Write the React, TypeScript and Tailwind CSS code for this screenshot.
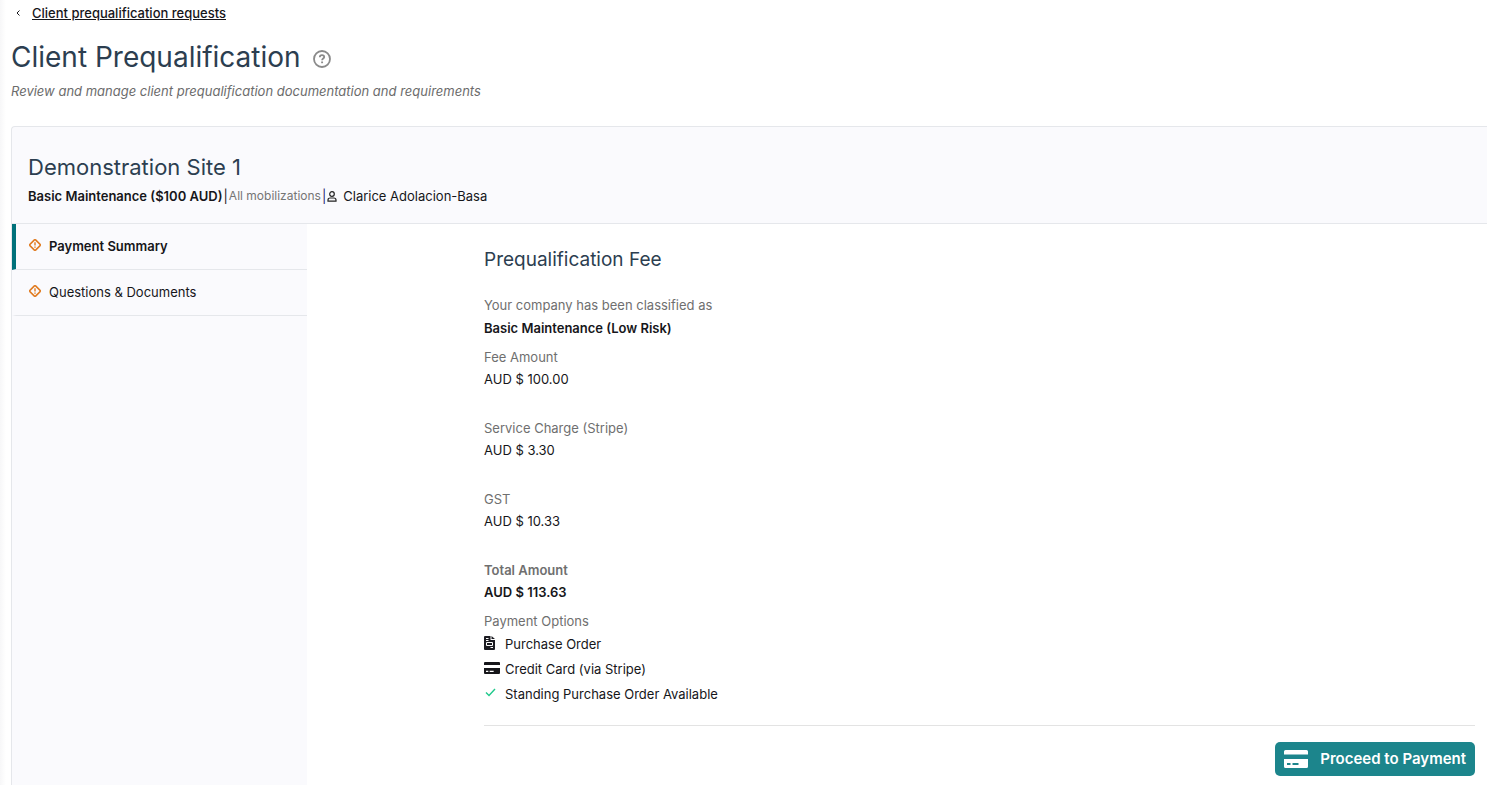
import React from 'react';

const fees = [
    { label: 'Fee Amount', value: 'AUD $ 100.00' },
    { label: 'Service Charge (Stripe)', value: 'AUD $ 3.30' },
    { label: 'GST', value: 'AUD $ 10.33' },
];

const steps = [
    { label: 'Payment Summary', active: true },
    { label: 'Questions & Documents', active: false },
];

const HelpIcon = () => (
    <svg viewBox="0 0 18 18" className="size-[18px]" fill="none" stroke="#8a8a8a" aria-hidden="true">
        <circle cx="9" cy="9" r="8" strokeWidth="1.8" />
        <path d="M6.800 7.300c0-1.400 1-2.200 2.200-2.200s2.200.7 2.200 1.900c0 1.500-2.100 1.500-2.100 3.200" strokeWidth="1.800" />
        <path d="M9.100 11.500v1.700" strokeWidth="1.900" />
    </svg>
);

const PersonIcon = () => (
    <svg viewBox="0 0 10 11" className="w-[10px] h-[11px]" fill="none" stroke="#222" strokeWidth="1.200" aria-hidden="true">
        <circle cx="5" cy="3" r="2.300" />
        <path d="M1 10.200V9c0-1.300 1-2 2.200-2h3.600C8 7 9 7.700 9 9v1.200z" />
    </svg>
);

const WarningIcon = () => (
    <svg viewBox="0 0 12 12" className="size-3" fill="none" stroke="#e07a1f" aria-hidden="true">
        <path d="M5.400.9a.8.8 0 0 1 1.200 0l4.500 4.500a.8.8 0 0 1 0 1.200l-4.500 4.500a.8.8 0 0 1-1.200 0L.9 6.600a.8.8 0 0 1 0-1.200z" strokeWidth="1.500" />
        <path d="M6 3.200v3.300M6 7.600v1.200" strokeWidth="1.400" />
    </svg>
);

const InvoiceIcon = () => (
    <svg viewBox="0 0 11 14" className="w-[11px] h-[14px]" aria-hidden="true">
        <path d="M1 0h5.500v4H11v9a1 1 0 0 1-1 1H1a1 1 0 0 1-1-1V1a1 1 0 0 1 1-1zM7.500 0 11 3H7.500z" fill="#1c1c22" />
        <path d="M2 2.500h2.500M2 4.500h2.500M6.500 11.500h2.500" stroke="#fff" />
        <path d="M2.500 6.500h6v3h-6z" fill="none" stroke="#fff" />
    </svg>
);

const CardIcon = ({ className }: { className: string }) => (
    <svg viewBox="0 0 24 18" className={className} fill="currentColor" aria-hidden="true">
        <path d="M1.500 0h21A1.500 1.500 0 0 1 24 1.500V4.500H0V1.500A1.500 1.500 0 0 1 1.500 0z" />
        <path fillRule="evenodd" d="M0 9h24v7.500a1.500 1.500 0 0 1-1.500 1.500h-21A1.500 1.500 0 0 1 0 16.500zM3 13v2h3.500v-2zM8.500 13v2h6v-2z" />
    </svg>
);

const CheckIcon = () => (
    <svg viewBox="0 0 11 9" className="w-[11px] h-[9px] ml-px" fill="none" stroke="#1fc98b" strokeWidth="1.400" aria-hidden="true">
        <path d="M1 4.600 4 7.500 10 1" />
    </svg>
);

const options = [
    { label: 'Purchase Order', icon: <InvoiceIcon /> },
    { label: 'Credit Card (via Stripe)', icon: <CardIcon className="w-4 h-3" /> },
    { label: 'Standing Purchase Order Available', icon: <CheckIcon /> },
];

export default function App() {
    return (
        <div className="min-h-screen flex flex-col pl-[11px] bg-white bg-linear-to-r from-[#f7f7f8] to-white to-[6px] text-[#16161a] text-[14px] leading-[22px] font-['Inter',sans-serif]">
            {/* Page heading */}
            <header className="pt-[2px] pb-6">
                <a href="#requests" className="flex items-center pl-[5px] gap-3 text-[13px] font-medium">
                    <svg viewBox="0 0 4 6" className="w-1 h-[6px]" fill="none" stroke="currentColor" aria-hidden="true">
                        <path d="M3.500.5 1 3l2.500 2.500" />
                    </svg>
                    <span className="underline">Client prequalification requests</span>
                </a>
                <div className="flex items-center gap-3 mt-3">
                    <h1 className="text-[28px] leading-[42px] text-[#2c3e50]">Client Prequalification</h1>
                    <button type="button" aria-label="Help" className="pt-1">
                        <HelpIcon />
                    </button>
                </div>
                <p className="mt-[2px] text-[13px] italic text-[#6c6c6c]">
                    Review and manage client prequalification documentation and requirements
                </p>
            </header>

            <main className="grow flex flex-col border-t border-l border-[#e5e7eb] rounded-tl-[4px] bg-[#fafafd]">
                <div className="pl-4 pt-6 pb-4 border-b border-[#e5e7eb]">
                    <h2 className="text-[22px] leading-8 text-[#2c3e50]">Demonstration Site 1</h2>
                    <div className="flex items-center gap-px mt-[2px] text-[13px]">
                        <span className="font-semibold">Basic Maintenance ($100 AUD)</span>
                        <span>|</span>
                        <span className="text-[12px] text-[#757575]">All mobilizations</span>
                        <span className="text-[#1d1d70]">|</span>
                        <span className="flex items-center gap-[6px]">
                            <PersonIcon />
                            Clarice Adolacion-Basa
                        </span>
                    </div>
                </div>

                <div className="grow flex">
                    {/* Steps */}
                    <nav className="w-1/5 shrink-0">
                        {steps.map(step => (
                            <a
                                key={step.label}
                                href="#step"
                                className={`flex items-center gap-2 h-[46px] pl-[13px] pb-px border-b border-b-[#e5e7eb] border-l-4 text-[13px] ${
                                    step.active ? 'border-l-[#00717a] font-semibold' : 'border-l-transparent'
                                }`}
                            >
                                <span className="pb-[2px]"><WarningIcon /></span>
                                {step.label}
                            </a>
                        ))}
                    </nav>

                    <section className="grow bg-white pl-[12%] pr-3 pt-5 pb-2 text-[13px]">
                        <h3 className="text-[19px] leading-8 text-[#2c3e50]">Prequalification Fee</h3>
                        <p className="mt-[18px] text-[#6f6f6f]">Your company has been classified as</p>
                        <p className="mt-[1px] mb-[7px] font-semibold">Basic Maintenance (Low Risk)</p>
                        <dl>
                            {fees.map(fee => (
                                <div key={fee.label} className="mb-[27px]">
                                    <dt className="text-[#6f6f6f]">{fee.label}</dt>
                                    <dd>{fee.value}</dd>
                                </div>
                            ))}
                            <div className="mb-[7px] font-semibold">
                                <dt className="text-[#6f6f6f]">Total Amount</dt>
                                <dd>AUD $ 113.63</dd>
                            </div>
                        </dl>
                        <p className="text-[#6f6f6f]">Payment Options</p>
                        <ul className="pb-[18px] border-b border-[#e3e3e3]">
                            {options.map(option => (
                                <li key={option.label} className="flex items-center h-[25px] pb-[2px]">
                                    <span className="w-[21px] pb-[2px]">{option.icon}</span>
                                    {option.label}
                                </li>
                            ))}
                        </ul>
                        <div className="flex justify-end mt-4">
                            <button
                                type="button"
                                className="flex items-center gap-3 h-[34px] px-[9px] rounded-[5px] bg-[#1c858c] text-[15px] font-semibold text-white"
                            >
                                <CardIcon className="w-6 h-[18px]" />
                                Proceed to Payment
                            </button>
                        </div>
                    </section>
                </div>
            </main>
        </div>
    );
}
